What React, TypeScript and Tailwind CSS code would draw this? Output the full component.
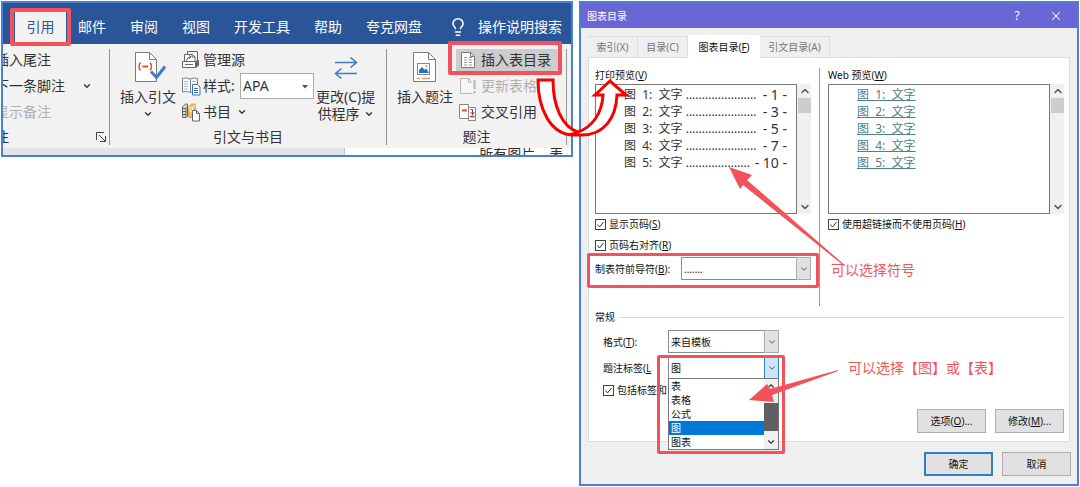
import React, { useState } from "react";
import { ChevronDown, ChevronUp, Lightbulb, X } from "lucide-react";
import clsx from "clsx";

const RIBBON_TABS = ["邮件", "审阅", "视图", "开发工具", "帮助", "夸克网盘"];

const PREVIEW_ROWS = [
  { id: 1, page: "- 1 -", dots: 22 },
  { id: 2, page: "- 3 -", dots: 22 },
  { id: 3, page: "- 5 -", dots: 22 },
  { id: 4, page: "- 7 -", dots: 22 },
  { id: 5, page: "- 10 -", dots: 20 },
];

const LABEL_OPTIONS = ["表", "表格", "公式", "图", "图表"];

const DIALOG_TABS = [
  { id: "index", label: "索引", hotkey: "X", underlined: false, width: "w-[50px]" },
  { id: "toc", label: "目录", hotkey: "C", underlined: false, width: "w-[50px]" },
  { id: "figures", label: "图表目录", hotkey: "F", underlined: true, width: "w-[72px]" },
  { id: "authorities", label: "引文目录", hotkey: "A", underlined: false, width: "w-[70px]" },
];

// Icons
const CitationIcon = () => (
  <svg width="32" height="34" viewBox="0 0 32 34" fill="none" className="ml-1">
    <path d="M1.5 1.5h14l7 7v22h-21z" fill="#fff" stroke="#7a7a7a" />
    <path d="M15.500 1.500v7h7" stroke="#7a7a7a" />
    <path d="M6.500 11.500q-3 4 0 8M16 11.500q3 4 0 8" stroke="#e0512f" strokeWidth="1.500" />
    <path d="M8.500 15.500h5.500" stroke="#e0512f" strokeWidth="2" />
    <path d="M17 20.500l5.500 6L31 15.500" stroke="#3f7cc0" strokeWidth="3" />
  </svg>
);

const CaptionIcon = () => (
  <svg width="24" height="34" viewBox="0 0 24 34" fill="none">
    <path d="M.5 1.500h15l7 7v22H.5z" fill="#fff" stroke="#7a7a7a" />
    <path d="M15.500 1.500v7h7" stroke="#7a7a7a" />
    <rect x="4.500" y="12.500" width="12" height="11" fill="#fff" stroke="#6c8fb8" />
    <path d="M6 22v-3l3-3 3 3 1-2 3 5z" fill="#2f6fba" />
    <circle cx="13.500" cy="15.200" r="1" fill="#e8973a" />
    <path d="M4 27.500h3M9 27.500h8" stroke="#e0a060" strokeWidth="1.500" />
  </svg>
);

const SourcesIcon = () => (
  <svg width="20" height="20" viewBox="0 0 20 20" fill="none" stroke="#666" className="shrink-0">
    <path d="M6.500 4V1.500h10V11" />
    <path d="M3.500 11V4.500h8l2.500 2.500v4" fill="#fff" />
    <path d="M5.500 11q0-4 4-4M8 5.500L10 7 8 9M14 7h-3V4.500" />
    <path d="M1.500 11.500h13v6h-13z" fill="#fff" />
    <path d="M14.500 17.500l3-2v-5l-3 1" fill="#666" />
    <path d="M4 14.500h8" />
  </svg>
);

const StyleIcon = () => (
  <svg width="20" height="20" viewBox="0 0 20 20" fill="none" className="shrink-0">
    <path d="M1.500 2.500q4-1.500 8 .5 4-2 7-.5v13q-4-1-7 1-4-2-8-.5z" fill="#fff" stroke="#6a7f99" />
    <path d="M9.500 3v13" stroke="#6a7f99" />
    <path d="M3 5.500h4M3 8h4M3 10.500h4M3 13h4M11.500 5.500h3.500" stroke="#9db4cf" />
    <path d="M11.500 8.500h5l2.500 2.500v8h-7.500z" fill="#fff" stroke="#3f72b0" />
    <path d="M13 12.500h4M13 14.500h4M13 16.500h4" stroke="#3f72b0" />
  </svg>
);

const BibliographyIcon = () => (
  <svg width="20" height="20" viewBox="0 0 20 20" fill="none" className="shrink-0">
    <path d="M1.500 5l3-3h2v12l-1.500 1.500H1.500z" fill="#d8d8d8" stroke="#666" />
    <path d="M1.500 6.500h3.500v9M5 6.500l2-2M2 9.500h3M2 12.500h3" stroke="#666" />
    <path d="M7.500 5l3-3h4v11l-2.500 2.500H7.500z" fill="#f4bd62" stroke="#eda53a" />
    <path d="M7.500 6h4v9M11.500 6l2.500-2.500M8 9h3" stroke="#fff" />
    <path d="M11.500 8.500h4l3 3v7.500h-7z" fill="#fff" stroke="#666" />
    <path d="M15.500 8.500v3h3" stroke="#666" />
  </svg>
);

const ProviderIcon = () => (
  <svg width="26" height="26" viewBox="0 0 26 26" fill="none" stroke="#3f7cc0" strokeWidth="1.600">
    <path d="M2 7.500h22M17.500 2.500l6 5-6 5" />
    <path d="M24 18.500H2M8.500 13.500l-6 5 6 5" />
  </svg>
);

const TableListIcon = () => (
  <svg width="17" height="18" viewBox="0 0 17 18" fill="none" className="shrink-0">
    <path d="M1.500 1.500h9l4 4v11h-13z" fill="#fff" stroke="#777" />
    <path d="M10.500 1.500v4h4" stroke="#777" />
    <path d="M4 6.500h3M8.500 6.500h3.500M4 9h3M8.500 9h3.500M4 11.500h3M8.500 11.500h3.500M4 14h3M8.500 14h3.500" stroke="#999" />
  </svg>
);

const UpdateIcon = () => (
  <svg width="17" height="18" viewBox="0 0 17 18" fill="none" stroke="#b5b5b5" className="shrink-0">
    <path d="M12.500 16.500h-12v-15h8l3 3" fill="#f6f6f6" />
    <path d="M8.500 1.500v4h3" />
    <path d="M14.500 3v9M14.500 14v2.500" strokeWidth="2" />
  </svg>
);

const CrossRefIcon = () => (
  <svg width="18" height="18" viewBox="0 0 18 18" fill="none" className="shrink-0">
    <path d="M.5 1.500h9v14h-9z" fill="#fff" stroke="#888" />
    <path d="M3 7.500h5" stroke="#d9532c" strokeWidth="2" />
    <path d="M9.500 4.500h7v13h-7z" fill="#fff" stroke="#888" />
    <path d="M11 13.500h4.500" stroke="#d9532c" strokeWidth="2" />
    <path d="M11.500 6.500h2v5M11.500 9l2 2.500 2-2.500" stroke="#555" />
  </svg>
);

const LauncherIcon = () => (
  <svg width="10" height="10" viewBox="0 0 10 10" fill="none" stroke="#444">
    <path d="M.5 8V.5H8M3 3l6 6M9.500 4v5.500H4" />
  </svg>
);

const Frame = ({ className }: { className: string }) => (
  <span
    className={clsx(
      "pointer-events-none absolute z-20 rounded-xs border-[#f4525a]",
      className,
    )}
  />
);

const Hotkey = ({ letter }: { letter: string }) => (
  <>
    (<u>{letter}</u>)
  </>
);

type CheckProps = { id: string; children: React.ReactNode };

const Check = ({ id, children }: CheckProps) => (
  <div className="flex h-3.5 items-center gap-[3px]">
    <span className="relative flex h-[11px] w-[11px] shrink-0">
      <input
        id={id}
        type="checkbox"
        defaultChecked
        className="peer h-[11px] w-[11px] appearance-none border border-[#444] bg-white"
      />
      <svg
        viewBox="0 0 11 11"
        className="pointer-events-none absolute inset-0 hidden peer-checked:block"
        fill="none"
        stroke="#333"
      >
        <path d="M2.500 5.500l2 2.500 4-5" />
      </svg>
    </span>
    <label htmlFor={id} className="whitespace-nowrap">
      {children}
    </label>
  </div>
);

const ScrollBar = () => (
  <div className="flex w-3.5 flex-col items-center bg-[#f0f0f0] pl-px">
    <ChevronUp className="h-3.5 w-3" strokeWidth={3} color="#555" />
    <div className="h-[15px] w-full bg-[#cdcdcd]" />
    <ChevronDown className="mt-auto h-3.5 w-3" strokeWidth={3} color="#555" />
  </div>
);

type SelectProps = {
  id: string;
  options: string[];
  value: string;
  onChange?: (value: string) => void;
  open?: boolean;
};

const Select = ({ id, options, value, onChange, open }: SelectProps) => (
  <div className="relative h-[23px] w-full">
    <select
      id={id}
      value={value}
      onChange={(e) => onChange?.(e.target.value)}
      className="h-full w-full appearance-none border border-[#8a8a8a] bg-white pl-[2px] outline-none"
    >
      {options.map((option) => (
        <option key={option}>{option}</option>
      ))}
    </select>
    <span
      className={clsx(
        "pointer-events-none absolute inset-y-0 right-0 flex w-[15px] items-center justify-center border",
        open ? "border-[#3c7fb1] bg-[#cce4f7]" : "border-[#acacac] bg-[#e1e1e1]",
      )}
    >
      <ChevronDown className="h-2.5 w-2.5" color="#444" />
    </span>
  </div>
);

const Ribbon = () => {
  const [style, setStyle] = useState("APA");

  return (
    <section className="overflow-hidden border-2 border-[#4a7fd6] bg-[#f2f2f2] text-[14px] leading-4 text-[#333]">
      <nav className="flex h-[41px] items-start bg-[#2a5699] pt-[9px] pl-3 text-white">
        <button className="relative h-[30px] w-[51px] shrink-0 bg-[#f2f2f2] text-[#2a5699]">
          引用
          <Frame className="-inset-x-[5px] -inset-y-1 border-4" />
        </button>
        <div className="ml-3 flex gap-6">
          {RIBBON_TABS.map((tab) => (
            <button key={tab} className="h-[30px] whitespace-nowrap">
              {tab}
            </button>
          ))}
        </div>
        <button className="ml-[26px] flex h-[30px] items-center gap-2.5 whitespace-nowrap">
          <Lightbulb className="h-5 w-5" strokeWidth={1.800} />
          操作说明搜索
        </button>
      </nav>

      <div className="grid grid-cols-[107fr_277fr_180fr_4px] pt-[5px] pb-[3px]">
        <div className="relative flex flex-col overflow-hidden border-r border-[#999]">
          <div className="-ml-2 flex flex-col gap-1 whitespace-nowrap">
            <button className="h-[22px] text-left">插入尾注</button>
            <button className="flex h-[22px] items-center justify-between pr-[17px]">
              下一条脚注
              <ChevronDown className="h-2.5 w-2.5" strokeWidth={3} />
            </button>
            <button disabled className="h-[22px] text-left text-[#b0b0b0]">
              显示备注
            </button>
          </div>
          <div className="mt-[6px] -ml-2 flex h-4 items-center justify-between pr-[3px]">
            注
            <button aria-label="脚注和尾注">
              <LauncherIcon />
            </button>
          </div>
        </div>

        <div className="border-r border-[#999]">
          <div className="flex h-[74px] pl-2.5 whitespace-nowrap">
            <button className="flex w-14 shrink-0 flex-col items-center pt-[2px]">
              <CitationIcon />
              <span className="mt-1">插入引文</span>
              <ChevronDown className="mt-1 h-2.5 w-2.5" strokeWidth={3} />
            </button>
            <div className="ml-[5px] flex flex-col gap-1">
              <button className="flex h-[22px] items-center gap-[2px]">
                <SourcesIcon />
                管理源
              </button>
              <div className="flex h-[22px] items-center gap-[2px]">
                <StyleIcon />
                <label htmlFor="citation-style" className="w-[35px]">
                  样式:
                </label>
                <span className="relative">
                  <select
                    id="citation-style"
                    value={style}
                    onChange={(e) => setStyle(e.target.value)}
                    className="h-[26px] w-[74px] appearance-none border border-[#ababab] bg-white pl-[2px] outline-none"
                  >
                    <option>APA</option>
                  </select>
                  <svg
                    width="6"
                    height="4"
                    viewBox="0 0 6 4"
                    className="pointer-events-none absolute top-3 right-1.5"
                  >
                    <path d="M0 0h6L3 3.500z" fill="#555" />
                  </svg>
                </span>
              </div>
              <button className="flex h-[22px] items-center gap-[2px]">
                <BibliographyIcon />
                书目
                <ChevronDown className="ml-1 h-2.5 w-2.5" strokeWidth={3} />
              </button>
            </div>
            <button className="ml-[2px] flex flex-col items-center pt-[6px]">
              <ProviderIcon />
              <span className="mt-2">更改(C)提</span>
              <span className="mt-px flex items-center gap-1">
                供程序
                <ChevronDown className="h-2.5 w-2.5" strokeWidth={3} />
              </span>
            </button>
          </div>
          <p className="mt-[6px] text-center">引文与书目</p>
        </div>

        <div className="border-r border-[#999]">
          <div className="flex h-[74px] pl-2.5 whitespace-nowrap">
            <button className="flex w-14 shrink-0 flex-col items-center pt-[2px]">
              <CaptionIcon />
              <span className="mt-1">插入题注</span>
            </button>
            <div className="ml-[3px] flex flex-1 flex-col gap-1 pr-2">
              <button className="relative flex h-[22px] items-center gap-1 bg-[#cdcdcd] pl-1">
                <TableListIcon />
                插入表目录
                <Frame className="-top-2 -right-1 -bottom-1 -left-2 border-4" />
              </button>
              <button disabled className="flex h-[22px] items-center gap-1 pl-1 text-[#b0b0b0]">
                <UpdateIcon />
                更新表格
              </button>
              <button className="flex h-[22px] items-center gap-1 pl-[3px]">
                <CrossRefIcon />
                交叉引用
              </button>
            </div>
          </div>
          <p className="mt-[6px] text-center">题注</p>
        </div>
      </div>

      <div className="grid h-[7px] grid-cols-[341fr_225fr] bg-[#e4e4e4]">
        <div className="border-r border-[#c4c4c4]" />
        <p className="overflow-hidden bg-white pl-[134px] leading-3 whitespace-nowrap">
          所有图片、表
        </p>
      </div>
    </section>
  );
};

const CurvedArrow = () => (
  <svg
    width="100"
    height="64"
    viewBox="0 0 100 64"
    fill="#fff"
    stroke="#f80000"
    strokeWidth="3"
    className="pointer-events-none absolute top-[71px] -left-[51px] z-30"
  >
    <path d="M8 6C8 34 20 61 44 61H52C74 61 86 44 87 21H96L80 7 65 21H73C72 40 62 53 48 58C32 53 23 32 23 6Z" />
    <path d="M40 60.500Q44 60 48 58" fill="none" />
  </svg>
);

const PrintPreview = () => (
  <div className="mt-[2px] flex h-[130px]">
    <div className="flex-1 border border-[#777] pt-px pr-[9px] pl-7 text-[12px] leading-[17px] text-[#333]">
      {PREVIEW_ROWS.map((row) => (
        <div key={row.id} className="flex justify-between whitespace-pre">
          <span>{`图  ${row.id}:  文字 ${".".repeat(row.dots)}`}</span>
          <span className="text-[14px]">{row.page}</span>
        </div>
      ))}
    </div>
    <ScrollBar />
  </div>
);

const WebPreview = () => (
  <div className="mt-[2px] flex h-[130px]">
    <div className="flex-1 border border-[#777] pt-px pl-7 text-[12px] leading-[17px]">
      {PREVIEW_ROWS.map((row) => (
        <a
          key={row.id}
          href={`#figure-${row.id}`}
          className="block whitespace-pre text-[#4d8386] underline"
        >
          {`图  ${row.id}:  文字`}
        </a>
      ))}
    </div>
    <ScrollBar />
  </div>
);

const FiguresDialog = () => {
  const [activeTab, setActiveTab] = useState("figures");
  const [label, setLabel] = useState("图");

  return (
    <section className="relative border-2 border-[#4a7fd6] bg-[#efefef] pb-2 text-[10px] leading-[14px] text-[#111]">
      <header className="flex h-[25px] items-center bg-[#6b66d6] pr-[14px] pl-1.5 text-white">
        <h1 className="flex-1">图表目录</h1>
        <button aria-label="帮助" className="w-3 text-[12px]">
          ?
        </button>
        <button aria-label="关闭" className="ml-[26px]">
          <X className="h-3.5 w-3.5" strokeWidth={1.800} />
        </button>
      </header>

      <div className="flex items-end px-[7px] pt-[7px]" role="tablist">
        {DIALOG_TABS.map((tab) => (
          <button
            key={tab.id}
            role="tab"
            aria-selected={activeTab === tab.id}
            onClick={() => setActiveTab(tab.id)}
            className={clsx(
              "relative whitespace-nowrap",
              tab.width,
              activeTab === tab.id
                ? "-mb-px h-[23px] bg-white"
                : "h-[21px] border-t border-r border-[#dcdcdc] text-[#777]",
            )}
          >
            {tab.label}
            {tab.underlined ? <Hotkey letter={tab.hotkey} /> : `(${tab.hotkey})`}
          </button>
        ))}
      </div>

      <div className="mx-[7px] border border-[#dcdcdc] bg-white pt-2.5 pr-[5px] pb-2 pl-1.5">
        <div className="grid grid-cols-[225fr_244fr]">
          <div className="border-r border-[#999] pr-2 pb-[26px]">
            <p>
              打印预览
              <Hotkey letter="V" />
            </p>
            <PrintPreview />
            <div className="mt-[3px] flex flex-col gap-[7px]">
              <Check id="show-pages">
                显示页码
                <Hotkey letter="S" />
              </Check>
              <Check id="align-right">
                页码右对齐
                <Hotkey letter="R" />
              </Check>
            </div>
            <div className="relative mt-[5px] flex items-center">
              <label htmlFor="leader" className="w-[86px] shrink-0">
                制表符前导符
                <Hotkey letter="B" />:
              </label>
              <Select id="leader" options={["......."]} value="......." />
              <Frame className="-inset-x-2 -top-1 -bottom-2 border-3" />
            </div>
          </div>

          <div className="pl-2">
            <p>
              Web 预览
              <Hotkey letter="W" />
            </p>
            <WebPreview />
            <div className="mt-[3px]">
              <Check id="use-links">
                使用超链接而不使用页码
                <Hotkey letter="H" />
              </Check>
            </div>
            <p className="mt-8 pl-[3px] text-[14px] text-[#f0575a]">可以选择符号</p>
          </div>
        </div>

        <div className="mt-1 flex items-center gap-1">
          <h2>常规</h2>
          <div className="h-px flex-1 bg-[#dcdcdc]" />
        </div>

        <div className="mt-[6px] flex pl-2">
          <div className="w-[176px] shrink-0">
            <div className="flex items-center">
              <label htmlFor="format" className="w-[65px] shrink-0">
                格式
                <Hotkey letter="T" />:
              </label>
              <Select id="format" options={["来自模板"]} value="来自模板" />
            </div>
            <div className="mt-[3px] flex items-center">
              <label htmlFor="caption-label" className="w-[65px] shrink-0">
                题注标签(<u>L</u>
              </label>
              <div className="relative flex-1">
                <Select
                  id="caption-label"
                  options={LABEL_OPTIONS}
                  value={label}
                  onChange={setLabel}
                  open
                />
                <div className="absolute inset-x-0 top-[22px] z-10 flex border border-[#777] bg-white">
                  <ul role="listbox" aria-label="题注标签" className="flex-1">
                    {LABEL_OPTIONS.map((option) => (
                      <li
                        key={option}
                        role="option"
                        aria-selected={option === label}
                        onClick={() => setLabel(option)}
                        className={clsx(
                          "h-3.5 pl-[2px]",
                          option === label && "bg-[#0078d7] text-white",
                        )}
                      >
                        {option}
                      </li>
                    ))}
                  </ul>
                  <div className="flex w-3.5 flex-col items-center bg-[#f0f0f0]">
                    <ChevronUp className="h-3.5 w-2.5" strokeWidth={3} color="#444" />
                    <div className="mt-2.5 h-7 w-full bg-[#606060]" />
                    <ChevronDown className="mt-auto h-3.5 w-2.5" strokeWidth={3} color="#444" />
                  </div>
                </div>
                <Frame className="-top-px -right-1.5 -left-[11px] h-[99px] border-3" />
              </div>
            </div>
            <div className="mt-1">
              <Check id="include-label">包括标签和</Check>
            </div>
          </div>
          <p className="mt-[31px] ml-[69px] text-[14px] whitespace-nowrap text-[#f0575a]">
            可以选择【图】或【表】
          </p>
        </div>

        <div className="mt-3 flex justify-end gap-[9px]">
          <button className="h-6 w-[69px] border border-[#adadad] bg-[#e1e1e1]">
            选项
            <Hotkey letter="O" />
            ...
          </button>
          <button className="h-6 w-[69px] border border-[#adadad] bg-[#e1e1e1]">
            修改
            <Hotkey letter="M" />
            ...
          </button>
        </div>
      </div>

      <footer className="mt-2.5 flex justify-end gap-[9px] pr-1.5">
        <button className="h-6 w-[69px] border-2 border-[#2a7fd0] bg-[#e1e1e1]">确定</button>
        <button className="h-6 w-[69px] border border-[#adadad] bg-[#e1e1e1]">取消</button>
      </footer>

      {/* pointers from the notes to the fields they describe */}
      <CurvedArrow />
      <svg
        width="120"
        height="102"
        viewBox="0 0 120 102"
        fill="#f4525a"
        className="pointer-events-none absolute top-[162px] left-[146px] z-30"
      >
        <path d="M2 2L25 10 20 15 120 102 116 100 16 20 13 24Z" />
      </svg>
      <svg
        width="92"
        height="34"
        viewBox="0 0 92 34"
        fill="#f4525a"
        className="pointer-events-none absolute top-[366px] left-[167px] z-30"
      >
        <path d="M1 31L19 15 22 20 90 1 90 2 24 26 26 33Z" />
      </svg>
    </section>
  );
};

export default function App() {
  return (
    <main className="grid grid-cols-[572fr_500fr] items-start gap-1.5 bg-white px-px pt-px font-['Noto_Sans','Noto_Sans_CJK_SC',sans-serif]">
      <Ribbon />
      <FiguresDialog />
    </main>
  );
}
